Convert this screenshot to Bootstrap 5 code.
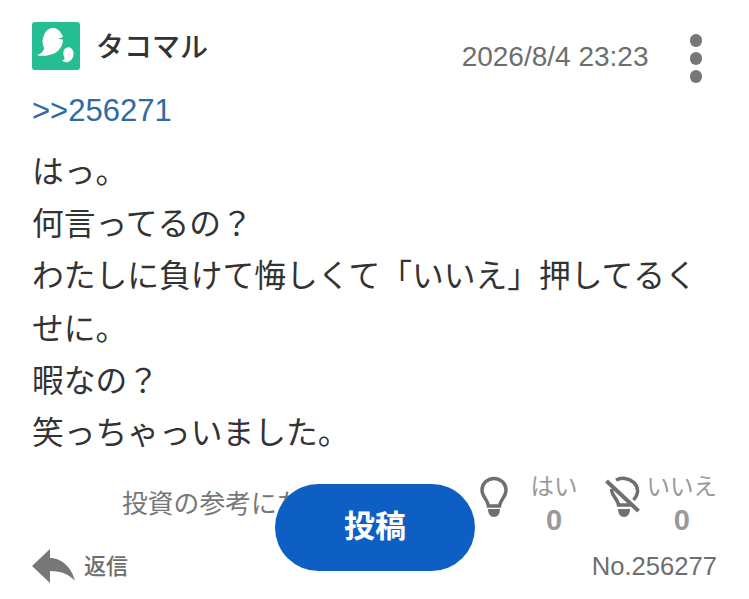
<!DOCTYPE html>
<html lang="ja">
<head>
    <meta charset="UTF-8">
    <meta name="viewport" content="width=device-width, initial-scale=1.0">
    <title>タコマル</title>
    <link href="https://cdn.jsdelivr.net/npm/bootstrap@5.3.0/dist/css/bootstrap.min.css" rel="stylesheet">
    <script src="https://cdn.jsdelivr.net/npm/bootstrap@5.3.0/dist/js/bootstrap.bundle.min.js"></script>
    <style>
        body {
            font-family: "Liberation Sans", "Noto Sans CJK JP", sans-serif;
            background-color: #fff;
            color: #333;
            height: 599px;
            overflow: hidden;
        }
        .post-wrap {
            position: relative;
            height: 599px;
            padding: 22px 32px 0 32px;
        }
        .post-head { height: 48px; }
        .avatar-box { width: 48px; height: 48px; border-radius: 3px; background-color: #25bd92; }
        .user-name { font-size: 28px; font-weight: 500; margin-left: 16px; margin-top: 2px; color: #333; line-height: 48px; }
        .post-date { font-size: 28px; color: #6e6e6e; margin-left: auto; margin-top: 16px; line-height: 38px; }
        .more-dots { margin-left: 41px; margin-right: 15px; margin-top: 12px; gap: 5.500px; }
        .more-dots span { display: block; width: 12.500px; height: 12.500px; border-radius: 50%; background-color: #777; }
        .reply-link { display: block; font-size: 31px; line-height: 36px; margin-top: 23px; color: #2f6aa8; text-decoration: none; }
        .post-body { font-size: 31.750px; line-height: 52.200px; margin: 17px 0 0; color: #333; width: 680px; }
        .vote-row { margin-top: 14px; height: 66px; }
        .vote-label { font-size: 25.800px; color: #777; margin-left: 90px; white-space: nowrap; width: 340px; overflow: hidden; margin-top: 13px; line-height: 36px; }
        .vote-group { margin-left: auto; }
        .vote-icon { margin-top: 3px; flex-shrink: 0; }
        .vote-item { color: #999; text-align: center; line-height: 1; margin-top: 3px; }
        .vote-item .vote-name { font-size: 23.500px; display: block; height: 30px; }
        .vote-item .vote-num { font-size: 29px; font-weight: 700; display: block; }
        .vote-yes { margin: 3px 26px 0 22px; }
        .vote-no { margin-left: 7px; }
        .foot-row { margin-top: 8px; }
        .reply-btn { font-size: 22px; font-weight: 500; color: #6e6e6e; margin-left: 8px; }
        .post-no { font-size: 25.600px; color: #6e6e6e; margin-left: auto; }
        .post-btn {
            position: absolute;
            left: 275px;
            top: 484px;
            width: 200px;
            height: 87px;
            border-radius: 44px;
            border: 0;
            background-color: #0e5fc4;
            color: #fff;
            font-size: 31px;
            font-weight: 700;
        }
    </style>
</head>
<body>
    <div class="post-wrap">
        <div class="post-head d-flex align-items-start">
            <div class="avatar-box flex-shrink-0">
                <svg width="48" height="48" viewBox="0 0 48 48">
                    <path d="M5 33C9 32 12 29 12 26C10 22 10 17 12 13C14 8 18 5.500 22 6C26 6.500 29 10 31 15L26 17L31 17.500C31 24 27 29 22 31.500C16 34 10 34.500 5 33z" fill="#fff"/>
                    <path d="M30 38.500C32 38 33 37 32.500 35.500C31 33 31 30 32 28C33.500 25 37 24.500 39 26C40.500 27 41 29 41.500 30L41.500 32C41.500 36 39 39 36 40C34 40.500 32 40 30 38.500z" fill="#fff"/>
                </svg>
            </div>
            <div class="user-name">タコマル</div>
            <div class="post-date">2026/8/4 23:23</div>
            <div class="more-dots d-flex flex-column"><span></span><span></span><span></span></div>
        </div>
        <a class="reply-link" href="#">&gt;&gt;256271</a>
        <p class="post-body">はっ。<br>何言ってるの？<br>わたしに負けて悔しくて「いいえ」押してるくせに。<br>暇なの？<br>笑っちゃっいました。</p>
        <div class="vote-row d-flex align-items-start">
            <div class="vote-label flex-shrink-0">投資の参考になった</div>
            <div class="vote-group d-flex align-items-start">
                <svg class="vote-icon" width="30" height="42" viewBox="0 0 30 42">
                    <path d="M9.500 30C9 24 3 21 3 14C3 7.500 8.500 2.500 15 2.500S27 7.500 27 14C27 21 21 24 20.500 30z" fill="none" stroke="#6f6f6f" stroke-width="3.500"/>
                    <path d="M9 33h12c0 5-2.500 8-6 8s-6-3-6-8z" fill="#6f6f6f"/>
                </svg>
                <div class="vote-item vote-yes"><span class="vote-name">はい</span><span class="vote-num">0</span></div>
                <svg class="vote-icon" width="36" height="42" viewBox="0 0 36 42">
                    <path d="M12 4C15 2.500 18 2 21 2.500C28 3.500 33 8 33.500 14C34 18 32 21 29.500 24" fill="none" stroke="#6f6f6f" stroke-width="3.500"/>
                    <path d="M7.500 13C7.500 20 14 23 14.500 29H27" fill="none" stroke="#6f6f6f" stroke-width="3.500"/>
                    <path d="M14 33h12c0 5-2.500 8-6 8s-6-3-6-8z" fill="#6f6f6f"/>
                    <path d="M2.500 5L34.500 35" stroke="#6f6f6f" stroke-width="4" fill="none"/>
                </svg>
                <div class="vote-item vote-no"><span class="vote-name">いいえ</span><span class="vote-num">0</span></div>
            </div>
        </div>
        <div class="foot-row d-flex align-items-center">
            <svg width="44" height="36" viewBox="0 0 44 36">
                <path d="M0 18L18 1v9C30 10 40 20 43 33C38 27 30 23 18 23v12z" fill="#777"/>
            </svg>
            <span class="reply-btn">返信</span>
            <span class="post-no">No.256277</span>
        </div>
        <button type="button" class="post-btn btn">投稿</button>
    </div>
</body>
</html>
